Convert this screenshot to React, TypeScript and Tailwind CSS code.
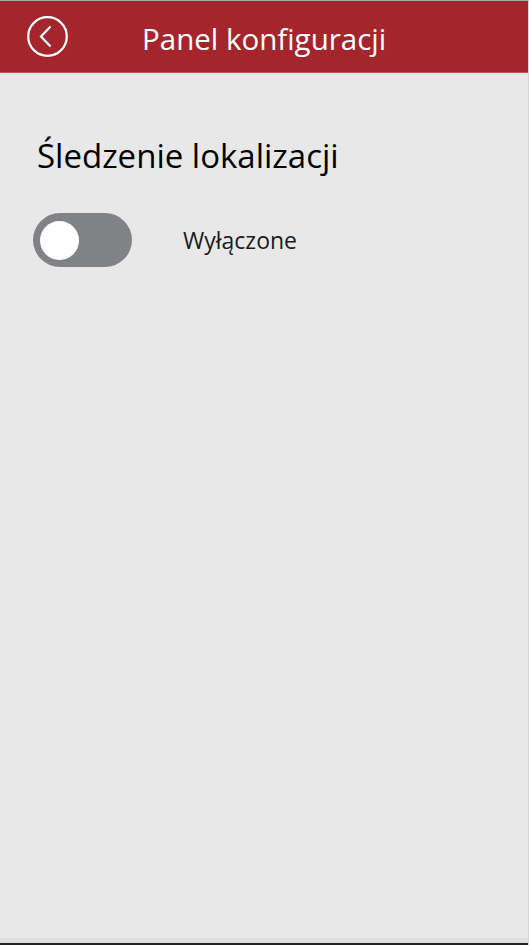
import React from "react";

export default function App() {
  return (
    <div
      className="w-[529px] h-[945px] flex flex-col bg-[#e8e8e8] border-t border-t-[#a8a8a8] border-r border-r-[#d6d6d6] overflow-hidden"
      style={{ fontFamily: '"Open Sans", "Noto Sans", sans-serif' }}
    >
      <header className="h-[72px] shrink-0 bg-[#a4262c] border-b border-b-[#c0545a] flex items-center">
        <button className="ml-[27px] w-[41px] h-[41px] flex items-center justify-center">
          <svg width="41" height="41" viewBox="0 0 41 41" fill="none">
            <circle cx="20.5" cy="20.5" r="19.3" stroke="white" strokeWidth="2.2" />
            <path d="M23.5 10.5 L14 20.5 L23.5 30.5" stroke="white" strokeWidth="2.2" fill="none" />
          </svg>
        </button>
        <h1 className="ml-[74px] text-[29.5px] leading-none text-white pt-[5px]">Panel konfiguracji</h1>
      </header>
      <main className="flex-1 flex flex-col pl-[33px]">
        <h2 className="mt-[66px] ml-[4px] text-[33px] leading-[33px] text-black font-normal">Śledzenie lokalizacji</h2>
        <div className="mt-[41px] flex items-center">
          <div className="w-[99px] h-[54px] rounded-full bg-[#808285] flex items-center pl-[7px]">
            <div className="w-[39px] h-[39px] rounded-full bg-white" />
          </div>
          <span className="ml-[51px] text-[23px] leading-none text-[#1a1a1a]">Wyłączone</span>
        </div>
      </main>
      <div className="h-[5px] shrink-0 bg-[#dedede]" />
      <div className="h-[2px] shrink-0 bg-[#222222]" />
    </div>
  );
}
